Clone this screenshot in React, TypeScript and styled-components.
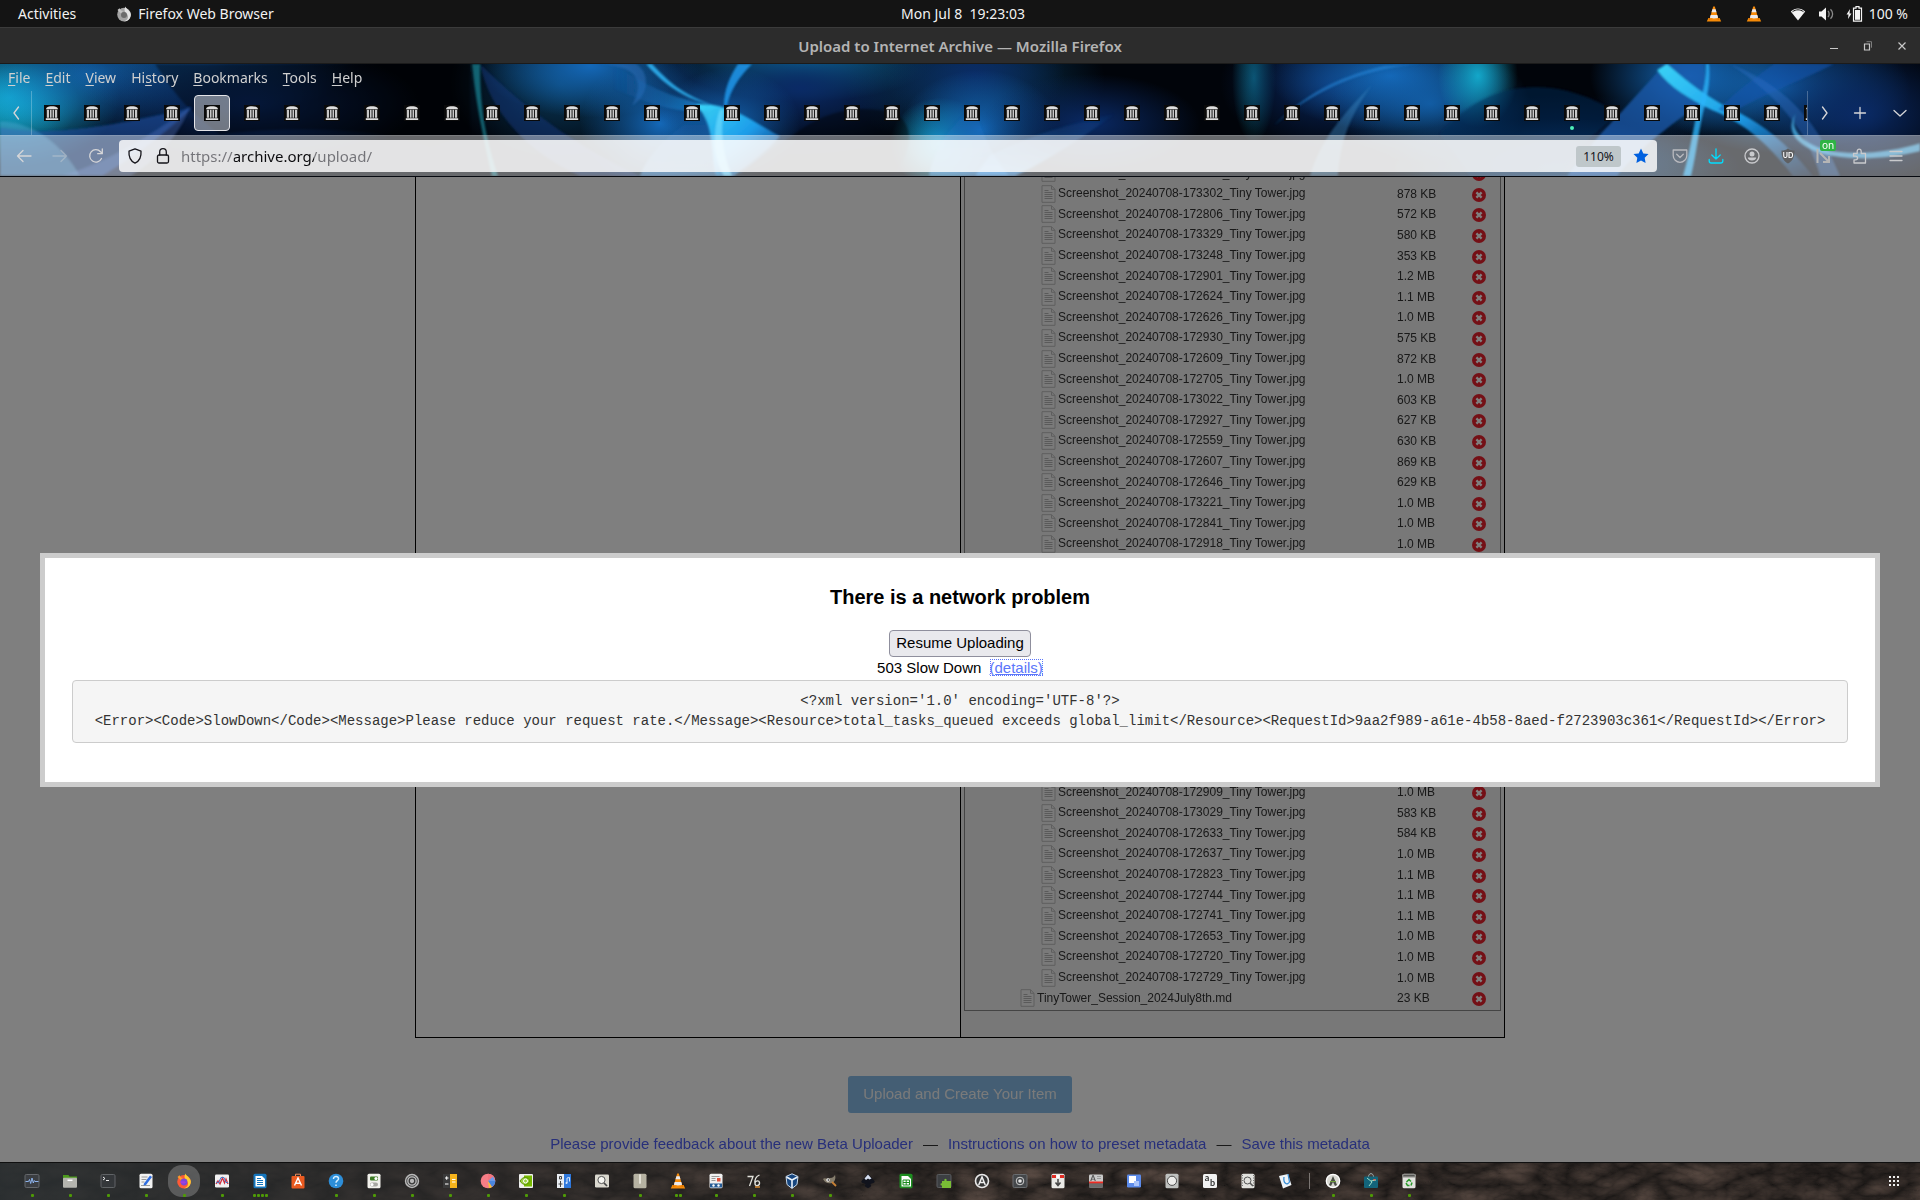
import React from "react";
import styled, { createGlobalStyle, css } from "styled-components";

const UI = `"Noto Sans", "Open Sans", sans-serif`;
const DOC = `"Liberation Sans", Arial, sans-serif`;
const MONO = `"Liberation Mono", "Courier New", monospace`;

const GlobalStyle = createGlobalStyle`
  *, *::before, *::after { box-sizing: border-box; }
  body { margin: 0; background: #141414; }
  button { font: inherit; color: inherit; background: none; border: 0; padding: 0; }
  svg { display: block; }
`;

/* ---------- shell ---------- */

const Desktop = styled.div`
  display: flex;
  flex-direction: column;
  height: 100vh;
  overflow: hidden;
  font-family: ${UI};
  font-size: 14px;
`;

const TopBar = styled.header`
  display: grid;
  grid-template-columns: 1fr auto 1fr;
  align-items: center;
  height: 27px;
  flex: none;
  padding: 0 12px 0 18px;
  background: #141414;
  color: #f2f2f2;
  line-height: 26px;
`;

const TopGroup = styled.div<{ $end?: boolean; $gap: number }>`
  display: flex;
  align-items: center;
  justify-content: ${(p) => (p.$end ? "flex-end" : "flex-start")};
  gap: ${(p) => p.$gap}px;
`;

const TopButton = styled.button`
  display: flex;
  align-items: center;
  gap: 6px;
`;

const Cones = styled.div`
  display: flex;
  gap: 24px;
  margin-right: 16px;
`;

const TitleBar = styled.div`
  display: grid;
  grid-template-columns: 1fr auto 1fr;
  align-items: center;
  height: 37px;
  flex: none;
  padding: 0 10px;
  background: #2c2c2c;
  border-top: 1px solid #3b3b3b;
  border-bottom: 1px solid #1b1b1b;
  color: #b4b4b4;
  font-size: 15px;
  font-weight: 600;
`;

const WindowControls = styled.div`
  grid-column: 3;
  display: flex;
  justify-content: flex-end;
  gap: 18px;
`;

const WindowTitle = styled.div`
  grid-column: 2;
`;

/* ---------- browser chrome ---------- */

const Chrome = styled.div`
  position: relative;
  flex: none;
  background: #000;
  border-bottom: 1px solid #06090f;
  color: #d6d6d8;
`;

const ThemeArt = styled.svg`
  position: absolute;
  inset: 0;
  width: 100%;
  height: 100%;
`;

const ChromeRows = styled.div`
  position: relative;
`;

const MenuBar = styled.nav`
  display: flex;
  align-items: center;
  gap: 15px;
  height: 27px;
  padding: 0 8px;
  color: #d0d0d0;
`;

const MenuItem = styled.button`
  line-height: 20px;
  u { text-underline-offset: 2px; }
`;

const TabRow = styled.div`
  display: flex;
  align-items: stretch;
  height: 44px;
`;

const TabArrow = styled.button<{ $w: number }>`
  flex: none;
  display: grid;
  place-items: center;
  width: ${(p) => p.$w}px;
`;

const TabStrip = styled.div`
  flex: 1;
  min-width: 0;
  display: flex;
  align-items: center;
  overflow: hidden;
  border-left: 1px solid #ffffff40;
  border-right: 1px solid #ffffff40;
`;

const Tab = styled.button<{ $active?: boolean }>`
  position: relative;
  flex: none;
  display: grid;
  place-items: center;
  width: 36px;
  height: 36px;
  margin: 0 2px;
  border-radius: 4px;
  border: 1px solid transparent;
  ${(p) => p.$active && css`
    background: #ffffff70;
    border-color: #e4e4e8;
  `}
`;

const TabDot = styled.span`
  position: absolute;
  left: 15px;
  bottom: 0;
  width: 4px;
  height: 4px;
  border-radius: 2px;
  background: #4ff0b8;
`;

const NavBar = styled.div`
  display: flex;
  align-items: center;
  height: 41px;
  padding: 0 6px;
  background: #ffffff68;
  border-top: 1px solid #ffffff20;
`;

const ToolButton = styled.button`
  position: relative;
  flex: none;
  display: grid;
  place-items: center;
  width: 36px;
  height: 36px;
`;

const Address = styled.form`
  flex: 1;
  display: flex;
  align-items: center;
  height: 32px;
  margin: 0 5px;
  padding: 0 2px 0 8px;
  border-radius: 4px;
  background: #ffffffd0;
  color: #15141a;
`;

const AddressIcon = styled.button`
  display: grid;
  place-items: center;
  width: 28px;
  height: 28px;
  &:first-child { width: 16px; margin-right: 6px; }
`;

const AddressInput = styled.input`
  flex: 1;
  min-width: 0;
  height: 28px;
  padding: 0;
  margin-left: 4px;
  border: 0;
  outline: 0;
  font: 15px ${UI};
  background: linear-gradient(90deg, #737378 53px, #0c0c0f 53px, #0c0c0f 133px, #737378 133px);
  -webkit-background-clip: text;
  background-clip: text;
  -webkit-text-fill-color: transparent;
`;

const ZoomBadge = styled.button`
  width: 45px;
  height: 21px;
  margin-right: 6px;
  border-radius: 3px;
  background: #bfc7ca;
  color: #15141a;
  font-size: 12px;
`;

const OnBadge = styled.span`
  position: absolute;
  top: 2px;
  left: 14px;
  padding: 0 2px;
  border-radius: 2px;
  background: #2fb344;
  color: #fff;
  font-size: 10px;
  line-height: 11px;
`;

/* ---------- page ---------- */

const Viewport = styled.main`
  position: relative;
  flex: 1;
  min-height: 0;
  display: flex;
  flex-direction: column;
  justify-content: flex-end;
  align-items: center;
  overflow: hidden;
  background: #fff;
  color: #333;
  font-family: ${DOC};
  font-size: 15px;
`;

const Panel = styled.div`
  flex: none;
  display: grid;
  grid-template-columns: 1fr 1fr;
  width: 100%;
  max-width: 1090px;
  border: 1px solid #000;
`;

const FilesPane = styled.div`
  padding: 3px 3px 26px;
  background: #f0f0f0;
  border-left: 1px solid #000;
`;

const FileTable = styled.table`
  width: 100%;
  border-collapse: separate;
  border-spacing: 0;
  table-layout: fixed;
  padding-bottom: 2px;
  border: 1px solid #888;
  font-size: 12px;
  td { padding: 0; }
`;

const FileRow = styled.tr`
  height: 21px;
  &:nth-child(5n + 1), &:nth-child(5n + 3) { height: 20px; }
`;

const Covered = styled.tr`
  height: 228px;
`;

const NameCell = styled.div<{ $top?: boolean }>`
  display: flex;
  align-items: center;
  gap: 2px;
  line-height: 17px;
  padding-left: ${(p) => (p.$top ? 55 : 76)}px;
  white-space: nowrap;
`;

const SizeCol = styled.col`
  width: 75px;
`;

const ActionCol = styled.col`
  width: 28px;
`;

const RemoveButton = styled.button`
  display: block;
`;

const Submit = styled.button`
  flex: none;
  width: 224px;
  height: 37px;
  margin-top: 38px;
  border-radius: 3px;
  background: #88bde8;
  color: #f4f4f4;
  font-size: 15px;
  padding-bottom: 3px;
`;

const PageLinks = styled.footer`
  flex: none;
  display: flex;
  gap: 10px;
  margin: 21px 0 8px;
  line-height: 20px;
`;

const PageLink = styled.a`
  color: #5060f4;
  text-decoration: none;
`;

const Backdrop = styled.div`
  position: absolute;
  inset: 0;
  display: flex;
  align-items: center;
  justify-content: center;
  padding: 0 40px;
  background: rgba(0, 0, 0, 0.5);
`;

const Dialog = styled.section`
  flex: 1;
  padding: 27px 27px 39px;
  border: 5px solid #ccc;
  background: #fff;
  color: #000;
  text-align: center;
  line-height: 22px;
`;

const DialogTitle = styled.h2`
  margin: 0 0 21px;
  font-size: 20px;
  line-height: 24px;
`;

const ResumeButton = styled.button`
  display: block;
  width: 142px;
  height: 27px;
  margin: 0 auto;
  border: 1px solid #8f8f9d;
  border-radius: 4px;
  background: #e9e9ed;
  color: #000;
  line-height: 20px;
`;

const Status = styled.div`
  padding-bottom: 1px;
`;

const DetailsLink = styled.a`
  margin-left: 4px;
  color: #5b76fa;
  outline: 1px dotted #5b76fa;
  outline-offset: -1px;
`;

const Response = styled.pre`
  margin: 0;
  padding: 10px 10px 11px;
  border: 1px solid #ccc;
  border-radius: 4px;
  background: #f5f5f5;
  color: #333;
  font: 14px/20px ${MONO};
`;

/* ---------- dock ---------- */

const Dock = styled.footer`
  position: relative;
  flex: none;
  height: 38px;
  border-top: 1px solid #101010;
  background: #272321;
`;

const DockRow = styled.div`
  position: relative;
  display: flex;
  align-items: center;
  height: 35px;
  padding: 0 7px 0 13px;
`;

const DockItem = styled.button<{ $active?: boolean }>`
  position: relative;
  flex: none;
  display: grid;
  place-items: center;
  width: 32px;
  height: 32px;
  margin: 0 3px;
  border-radius: 14px;
  background: ${(p) => (p.$active ? "#ffffff38" : "transparent")};
`;

const Dots = styled.span`
  position: absolute;
  left: 0;
  right: 0;
  bottom: 0;
  display: flex;
  justify-content: center;
  gap: 1px;
  i { width: 3px; height: 3px; border-radius: 1px; background: #4e9a06; }
`;

const DockDivider = styled.span`
  width: 1px;
  height: 16px;
  margin: 0 4px;
  background: #7b7673;
`;

const DockEnd = styled(DockItem)`
  margin-left: auto;
`;

/* ---------- icons ---------- */

const line = { fill: "none", stroke: "currentColor", strokeWidth: 1.3, strokeLinecap: "round", strokeLinejoin: "round" } as const;

const Svg = ({ s = 16, children }: { s?: number; children: React.ReactNode }) => (
  <svg width={s} height={s} viewBox="0 0 16 16" aria-hidden="true">{children}</svg>
);

const coneShape = (
  <>
    <path d="M2.4 12h11.2l1.6 3.6H.8z" fill="#f58a07" />
    <path d="M3.4 12h9.2l.6 1.4H2.8z" fill="#c85f04" />
    <path d="M7.2.5h1.6L12.4 13c-2 1.3-6.800 1.300-8.800 0z" fill="#f78b0a" />
    <path d="M6.400 3.200h3.200l.9 3H5.500zM4.700 9h6.600l.8 2.600c-2 1.200-6.200 1.200-8.200 0z" fill="#e9e9ee" />
  </>
);

const Archive = () => (
  <Svg>
    <rect width="16" height="16" fill="#0a0a0a" />
    <path d="M1.800 4.300 2.800 2.500C5 .8 11 .8 13.200 2.500l1 1.800zM1.800 13.200h12.400V15H1.800z" fill="#dedede" />
    <path d="M2.800 4.800h2.300v8H2.800zM6 4.800h1.600v8H6zM8.500 4.800H10v8H8.500zM10.900 4.800h2.300v8h-2.300z" fill="#c8c8c8" />
  </Svg>
);

const FirefoxMono = () => (
  <Svg>
    <circle cx="8" cy="8.600" r="6.800" fill="#a4a4a4" />
    <path d="M9.500.5c0 2 4.500 3.500 5.300 7.500.5 4-2.800 7.500-6.800 7.500 4-1.500 5-5 3-7.500-2-1.500-3.500-4-1.500-7.500z" fill="#e4e4e4" />
    <path d="M1.500 4 3.500 2.200 5 4.500l2 .5-2 2.500z" fill="#c4c4c4" />
    <circle cx="8" cy="9" r="3" fill="#6c6c6c" />
  </Svg>
);

const FileGlyph = () => (
  <svg width="15" height="18" viewBox="0 0 15 18" aria-hidden="true">
    <path d="M1 .7h9.500L14 4.300v13H1z" fill="#f4f4f4" stroke="#bdbdbd" />
    <path d="M10.500.7v3.600H14" fill="none" stroke="#bdbdbd" />
    <path d="M3.500 5.500h4M3.500 7.500h8M3.500 9.500h8M3.500 11.500h8M3.500 13.500h8" stroke="#b4b4b4" />
  </svg>
);

const RemoveGlyph = () => (
  <svg width="14" height="16" viewBox="0 0 14 16" aria-hidden="true">
    <circle cx="7" cy="9" r="7" fill="#e8202c" />
    <path d="m4.400 6.400 5.200 5.200m0-5.200-5.200 5.200" stroke="#fff" strokeWidth="2.300" />
  </svg>
);

const label = (text: string, fill: string, size: number, y = 12, x = 8) => (
  <text x={x} y={y} textAnchor="middle" fontFamily="Lato, sans-serif" fontSize={size} fontWeight="700" fill={fill}>{text}</text>
);

type App = { name: string; dots: number; art: React.ReactNode; active?: boolean };

const sheet = (fill: string, extra?: React.ReactNode) => (
  <><rect x="1.500" y=".8" width="13" height="14.400" rx="1.500" fill={fill} />{extra}</>
);
const square = (fill: string, extra?: React.ReactNode, stroke = "none") => (
  <><rect x="1" y="1.500" width="14" height="13" rx="1.300" fill={fill} stroke={stroke} />{extra}</>
);

const apps: App[] = [
  { name: "System Monitor", dots: 1, art: square("#3b3e42", <path d="M1.500 8.500h3l1-2 1.200 4L8 5l1.300 5 1-2.500.7 1h3.500" fill="none" stroke="#8db4ee" />, "#65686c") },
  { name: "Files", dots: 1, art: <><path d="M1 2h5.500l1 1.500H15V8H1z" fill="#4c9a1c" /><rect x="1" y="4.800" width="14" height="10" rx="1" fill="#b4b4ae" /><path d="M5.500 7.300h5" stroke="#fff" strokeWidth="1.500" /></> },
  { name: "Terminal", dots: 1, art: square("#34373a", <path d="m3 4 2 1.500L3 7M6 7.500h3" fill="none" stroke="#eee" />, "#606366") },
  { name: "Text Editor", dots: 1, art: sheet("#f2f2f2", <><path d="M3.500 4h6M3.500 6.500h5M3.500 9h3M3 12.500h9" stroke="#9a9a9a" /><path d="m6 10.500 6-8 2 1.500-6 8-2.500.6z" fill="#2f6de0" /></>) },
  { name: "Firefox", dots: 1, active: true, art: <><circle cx="8" cy="8.800" r="6.800" fill="#ff5a36" /><path d="M9.500.5C9.500 2.500 14 4 14.800 8c.5 4-2.800 7.500-6.800 7.500 4-1.500 5-5 3-7.500-2-1.500-3.500-4-1.500-7.500z" fill="#ffcf30" /><path d="M1.500 4 3.500 2.200 5 4.500l2 .5-2 2.500z" fill="#ff9a2a" /><circle cx="8" cy="9" r="3.400" fill="#7b48d8" /><path d="M4 8c2 1 5-1 6 1.500-2 2-5.500 1.500-6-1.500z" fill="#a23ee0" /></> },
  { name: "Power Statistics", dots: 1, art: square("#f1f1f1", <><path d="m2 11 2-3 2 3 2.500-6 2 5 1.500-4 2 5" fill="none" stroke="#d22d3d" strokeWidth="1.300" /><path d="m2 9 2.500 1L7 4.500h3l2 5h2" fill="none" stroke="#4878c8" /></>) },
  { name: "Writer", dots: 4, art: sheet("#1676bd", <><path d="M3.500 3H10l3 3v7.500H3.500z" fill="#fff" /><path d="M5 5.500h4M5 7.500h6M5 9.500h6M5 11.500h6" stroke="#1676bd" /></>) },
  { name: "Software", dots: 0, art: <><path d="M5.500 3V1.200h5V3" fill="none" stroke="#f28b5c" /><rect x="1.500" y="3" width="13" height="12.500" rx="1" fill="#ea5a20" /><path d="M4.500 12.500 8 5l3.500 7.500M5.500 10.300h5" fill="none" stroke="#fff" strokeWidth="1.400" /></> },
  { name: "Help", dots: 1, art: <><circle cx="8" cy="8" r="7.300" fill="#2d8ed8" /><path d="M5.500 6c0-3.600 5.500-3.200 5 0-.3 1.700-2.500 1.700-2.500 3.800M8 11.500v1.600" fill="none" stroke="#d9f0ff" strokeWidth="1.500" /></> },
  { name: "Tweaks", dots: 1, art: sheet("#f1f1ec", <><rect x="4" y="3.500" width="8" height="4" rx="1" fill="#3c7a24" /><circle cx="10" cy="5.500" r="1.600" fill="#fff" /><rect x="4" y="9.500" width="8" height="4" rx="2" fill="#a7a7a2" /><circle cx="6" cy="11.500" r="1.500" fill="#fff" /></>) },
  { name: "Clock Applet", dots: 1, art: <><circle cx="8" cy="8" r="7.200" fill="#b9b9b9" /><circle cx="8" cy="8" r="5.300" fill="#b9b9b9" stroke="#4b4b4b" /><circle cx="8" cy="8" r="2.800" fill="none" stroke="#3b3b3b" strokeWidth="1.300" /></> },
  { name: "Calculator", dots: 1, art: <><path d="M1 1h7v14H1z" fill="#3a3a3a" /><path d="M8 1h7v14H8z" fill="#f6b41c" /><path d="M3 5h3.500M4.700 3.300v3.500M3 11h3.500M10 6.500h3.500M10 9h3.500" stroke="#fff" /></> },
  { name: "Disk Usage", dots: 1, art: <><circle cx="8" cy="8" r="7.300" fill="#f67e86" /><path d="M8 8V.7A7.300 7.300 0 0 1 15.300 8z" fill="#f4747c" /><path d="M8 8h7.300A7.300 7.300 0 0 1 12 14z" fill="#4a86e0" /><path d="m8 8 4 6a7 7 0 0 1-3 1.200z" fill="#f5c33a" /><path d="m8 8 5-4.500 2.300 4.500z" fill="#6d9ae8" /></> },
  { name: "NVIDIA Settings", dots: 1, art: <><rect x="1" y="1" width="14" height="14" rx="1" fill="#efefef" /><path d="M6 2.500h8v11H6z" fill="#76b900" /><path d="M2 8c3-5 8-4.500 10 0-2 4-7 5-10 0z" fill="#9ccf45" stroke="#5b9500" /><circle cx="7.500" cy="8" r="2" fill="none" stroke="#fff" /></> },
  { name: "Character Tools", dots: 1, art: <><path d="M1 1h7v14H1z" fill="#e9edf2" /><path d="M8 1h7v14H8z" fill="#2f78dc" /><path d="M4.500 8v6M2.500 11h4M3.500 3.500h2v2.500h-2z" fill="none" stroke="#444" /><path d="M11 10V5l2.500-.5v4" fill="none" stroke="#d7e8ff" /><circle cx="10.500" cy="10" r="1" fill="#d7e8ff" /></> },
  { name: "Image Viewer", dots: 0, art: square("#dad8cf", <><circle cx="7.500" cy="7" r="3.600" fill="#f6f6f2" stroke="#555" /><path d="m10 10 3 3" stroke="#444" strokeWidth="1.700" /></>) },
  { name: "Archive Manager", dots: 1, art: sheet("#b6b2a2", <path d="M8 1v10M7 3h2M7 5h2M7 7h2M7 9h2" stroke="#f2f0e6" />) },
  { name: "VLC", dots: 2, art: coneShape },
  { name: "Document Viewer", dots: 1, art: sheet("#f0f0f0", <><path d="M3.500 3.500h8M3.500 5.500h4M3.500 7.500h4" stroke="#999" /><path d="M9 5h3.500v3.500H9z" fill="#e0503a" /><path d="M2 10.500h12v4H2z" fill="#245a94" /><circle cx="5.500" cy="12.500" r="1.200" fill="#fff" /><circle cx="10.500" cy="12.500" r="1.200" fill="#fff" /></>) },
  { name: "Font Manager", dots: 1, art: <><path d="M1.500 3.500H7L3.500 13M13.500 2C9 4 8.500 8 9 11c.5 2.500 5 2 4.500-1.500-.5-2.500-4-2-4.500.5" fill="none" stroke="#e2e2dc" strokeWidth="1.300" /><path d="M9 14h5" stroke="#d88a2e" strokeWidth="1.500" /></> },
  { name: "VirtualBox", dots: 1, art: <><path d="M2 3.500 8 .8l6 2.700-1 8L8 15.500l-5-4z" fill="#17467f" stroke="#c4d6ea" /><path d="m2.500 4 5.500 3 5.500-3M8 7v8" fill="none" stroke="#e9f2fb" strokeWidth="1.600" /></> },
  { name: "GIMP", dots: 1, art: <><path d="M1 6c2-2 4 1 7-1 3 0 4-2 5-3 1 3 0 7-3 8-4 1-7 0-9-4z" fill="#857d6d" /><circle cx="6" cy="7" r="1.700" fill="#fff" /><circle cx="6.300" cy="7" r=".8" fill="#111" /><path d="m10 9 4 4" stroke="#c98236" strokeWidth="1.800" /></> },
  { name: "Inkscape", dots: 0, art: <><path d="M8 .8 14.500 8c1 2-3 2.500-4 3 0 1.500 1.500 1.500 0 2.700L8 15.200l-2.500-1.500c-1.500-1.200 0-1.200 0-2.700-1-.5-5-1-4-3z" fill="#11131c" /><path d="M8 1.500 11.500 5.500 9.500 6.500 8 5.500 6 7 4.500 5.500z" fill="#d7dff0" /></> },
  { name: "Calc", dots: 0, art: sheet("#1d8d20", <><path d="M3.500 3H10l3 3v7.500H3.500z" fill="#fff" /><path d="M5 7h6.500v5H5zM5 9.500h6.500M8.200 7v5" fill="none" stroke="#1d8d20" /></>) },
  { name: "Extensions", dots: 0, art: square("#3c3f42", <path d="M6 8h2.500c-1-3 3-3 2 0H15v7H6v-2.500c-2 .8-2-3 0-2z" fill="#79bd35" />, "#5a5d60") },
  { name: "Software Updater", dots: 0, art: <><circle cx="8" cy="8" r="6.500" fill="#353535" stroke="#e8e8e8" strokeWidth="1.600" /><path d="M4.700 12 8 4l3.300 8M5.800 9.500h4.400" fill="none" stroke="#eee" strokeWidth="1.500" /></> },
  { name: "Screenshot", dots: 0, art: square("#44474a", <><circle cx="8" cy="8" r="3.800" fill="none" stroke="#cfcfcf" /><circle cx="8" cy="8" r="1.800" fill="#e6e6e6" /></>, "#6a6d70") },
  { name: "Transmission", dots: 0, art: sheet("#e9e9e6", <><path d="M2 2h4v3H2zM10 2h4v3h-4z" fill="#e02d24" /><path d="M6.500 2h3v3h-3z" fill="#fff" /><path d="M8 6v6M5.500 9.500 8 12.500l2.500-3" fill="none" stroke="#444" strokeWidth="1.500" /></>) },
  { name: "Document Scanner", dots: 0, art: square("#c9c9c9", <><path d="M1 10h14v4.500H1z" fill="#6a6a6a" /><path d="M1 8.500h14v1.800H1z" fill="#ee2b22" />{label("A", "#555", 8, 8, 5)}<path d="M9 3.500h4M9 5.500h4" stroke="#999" /></>) },
  { name: "Displays", dots: 0, art: square("#5c8bea", <><path d="M3 3h7v7H3z" fill="#fff" /><path d="M8 8h5v5H8z" fill="#a8c3fa" /></>) },
  { name: "Disks", dots: 0, art: sheet("#bfc1bf", <circle cx="8" cy="7.800" r="4.600" fill="#ececea" stroke="#4e4e4e" />) },
  { name: "Fonts", dots: 0, art: <><rect x="1" y="1" width="14" height="14" rx="1.500" fill="#f2f2f2" />{label("a", "#333", 9, 8, 5)}{label("b", "#333", 9, 13, 10.500)}</> },
  { name: "Log Viewer", dots: 0, art: sheet("#e1e1dd", <><circle cx="7.500" cy="7.500" r="3.500" fill="none" stroke="#555" /><path d="m10 10 3 3" stroke="#555" strokeWidth="1.500" /><path d="M2.500 2v12M13.500 2v12" stroke="#777" strokeDasharray="1 1.500" /></>) },
  { name: "Sticky Notes", dots: 0, art: <><path d="m1 3 9-2 3.500 11L5 15.500z" fill="#eef3f7" /><path d="M6 4c-1 6 3 9 5.500 5L10 1" fill="none" stroke="#3b8fd6" strokeWidth="1.300" /></> },
];

const rightApps: App[] = [
  { name: "Appimage", dots: 1, art: <><circle cx="8" cy="8" r="6.700" fill="#d8d8d2" stroke="#fff" strokeWidth="1.300" /><path d="M4 12 8 3l4 9-2 1-2-4-2 4z" fill="#4a4d45" /><path d="M5 8.500h6" stroke="#6fa03a" /></> },
  { name: "Snap Store", dots: 1, art: <><path d="M5.500 4c0-4.500 5-4.500 5 0" fill="none" stroke="#9fb4b8" /><rect x="1" y="3.500" width="14" height="11.500" rx="1" fill="#13647a" /><path d="m4 5 5 4-3 4M8 8l5-1" fill="none" stroke="#9fe0c8" /><path d="m10 6 3 0-2 2z" fill="#e8604a" /></> },
  { name: "Trash", dots: 1, art: sheet("#e2e2de", <><path d="M1.500 1h13v3.500h-13z" fill="#8c8c88" /><path d="M2.500 2.700h11" stroke="#4b4b48" /><path d="m5.500 9 2.500-2.500 2 2M5 10l1.500 2.500h2M11 9.500l-1 3" fill="none" stroke="#2b9a2b" strokeWidth="1.500" /></>) },
];

/* ---------- theme artwork ---------- */

const glows: [number, number, number, number, string, number][] = [
  [10, 34, 110, 70, "teal", 1], [20, 40, 60, 40, "teal", 0.7], [90, 10, 140, 70, "blue", 0.8], [205, -4, 150, 60, "blue", 0.55],
  [250, 40, 170, 60, "navy", 0.9], [560, 20, 110, 80, "deep", 1], [590, 2, 110, 52, "blue", 1], [660, 60, 80, 70, "blue", 1],
  [805, -6, 130, 44, "teal", 0.9], [800, 24, 160, 70, "navy", 1], [730, 60, 70, 56, "blue", 0.9], [975, 16, 130, 76, "deep", 1],
  [975, 10, 90, 60, "navy", 0.9], [940, 80, 50, 46, "teal", 1], [980, 66, 80, 60, "blue", 1], [1090, 60, 110, 50, "navy", 1],
  [1254, 14, 22, 66, "teal", 0.55], [1330, 20, 110, 70, "navy", 0.9], [1390, 12, 120, 56, "blue", 1], [1430, 40, 100, 60, "blue", 0.8],
  [1478, 12, 40, 52, "teal", 0.9], [1560, 105, 180, 50, "deep", 1], [1560, 90, 160, 60, "navy", 0.6], [1690, 12, 100, 64, "blue", 1],
  [1780, 24, 130, 66, "blue", 0.9], [1860, 50, 110, 70, "navy", 1],
];

const Theme = () => (
  <ThemeArt viewBox="0 0 1920 113" preserveAspectRatio="none" aria-hidden="true">
    <defs>
      {[["teal", "#14b4d6"], ["blue", "#1468b8"], ["deep", "#0a3a5c"], ["navy", "#0a2a66"]].map(([id, c]) => (
        <radialGradient key={id} id={id}>
          <stop offset="0" stopColor={c} />
          <stop offset="1" stopColor={c} stopOpacity="0" />
        </radialGradient>
      ))}
      <linearGradient id="ray"><stop offset="0" stopColor="#1a5cae" stopOpacity=".2" /><stop offset="1" stopColor="#22b4ff" /></linearGradient>
      <linearGradient id="ray2" x1="0" y1="0" x2="1" y2="1"><stop offset="0" stopColor="#3fe0ff" /><stop offset=".5" stopColor="#1ea6f4" /><stop offset="1" stopColor="#1e70d8" stopOpacity=".15" /></linearGradient>
      <linearGradient id="wash" x1="0" y1="0" x2="0" y2="1"><stop offset="0" stopColor="#1a5cae" stopOpacity=".05" /><stop offset="1" stopColor="#3c9cf0" stopOpacity=".7" /></linearGradient>
      <filter id="soft" x="-2%" width="104%" y="-20%" height="140%"><feGaussianBlur stdDeviation="1.200" /></filter>
    </defs>
    <rect width="1920" height="113" fill="#01040a" />
    {glows.map(([x, y, rx, ry, id, o], i) => <ellipse key={i} cx={x} cy={y} rx={rx} ry={ry} fill={`url(#${id})`} opacity={o} />)}
    <g filter="url(#soft)">
      <path d="M155 0c20 30 30 45 65 71 60-8 160-8 210 12L470 71V0z" fill="#000" opacity=".4" />
      <path d="M0 64c60 10 120-4 192-20-20 20-50 45-90 69H0z" fill="#1b4fa0" opacity=".6" />
      <path d="M0 58c30 0 60 20 80 55H0z" fill="#5eb8e6" opacity=".35" />
      <path d="M60 113c40-10 90-40 130-70-10 30-40 60-60 70z" fill="#5678c8" opacity=".35" />
      <path d="M472 0c3 30 8 60 20 113h6C484 70 480 40 480 0z" fill="#1fb6c8" opacity=".5" />
      <path d="M480 0c40 40 90 80 160 113h-60C530 90 490 50 480 0z" fill="#183c88" opacity=".45" />
      <path d="M600 0c40 2 44 20 32 42 18-10 18-34 4-42z" fill="#3a7fd0" opacity=".35" />
      <path d="M615 0c26 20 62 38 106 43-24 10-60 4-106-18z" fill="url(#ray)" opacity=".6" />
      <path d="M652 0c18 20 36 34 66 43-32-7-52-20-72-43z" fill="#2cb0f0" opacity=".9" />
      <path d="M752 0c-14 14-22 28-25 42h-3c0-16 6-30 14-42z" fill="#1f98ec" opacity=".85" />
      <path d="M696 41c32-2 46 10 84 32-12 14-30 28-46 40h-18c-6-24 0-50-20-72z" fill="url(#ray2)" opacity=".9" />
      <path d="M720 46c-7 20-8 46 4 67h8c-10-24-12-44-8-67z" fill="#6cdcff" opacity=".7" />
      <path d="M706 46c-30 20-56 40-66 67h76c-4-24-4-46-10-67z" fill="url(#wash)" opacity=".7" />
      <path d="M790 74c30-24 60-34 100-26 30 10 20 50 0 65H740c10-14 30-26 50-39z" fill="#000" opacity=".4" />
      <path d="M990 92c40-20 80-32 125-42-34 26-70 48-100 63h-40z" fill="url(#wash)" />
      <path d="M975 40c-20 20-40 40-46 73h80c-20-24-30-50-34-73z" fill="url(#wash)" opacity=".8" />
      <path d="M1290 48c40-28 80-44 130-48l-36 2c-50 12-80 30-110 60z" fill="#2a8ce0" opacity=".55" />
      <path d="M1310 113c10-34 30-60 62-92-24 34-32 60-34 92z" fill="#3c8ec8" opacity=".4" />
      <path d="M1440 71c50-60 120-60 180-20-30 20-50 40-60 62h-90z" fill="#0c2c58" opacity=".5" />
      <path d="M1620 50 1665 0h38c3 14 2 24 4 36-30 20-70 50-90 77h-50c16-20 30-40 53-63z" fill="#1a5cae" opacity=".75" />
      <path d="M1667 0c16 14 30 26 54 40 44 20 66 40 92 73h-20c-26-34-50-54-80-66-24-12-44-24-56-41z" fill="url(#ray2)" opacity=".9" />
      <path d="M1706 0c1 14-3 28-7 42-6 20-8 44-16 71h8c6-26 8-50 14-72 4-14 5-28 4-41z" fill="#2ab4fa" opacity=".8" />
      <path d="M1718 46c20-20 40-34 56-46h60c-40 20-70 30-104 50z" fill="#1a58b0" opacity=".55" />
      <path d="M1730 0c50 20 84 50 110 113h-20c-10-40-40-80-90-113z" fill="#2c70c8" opacity=".4" />
      <path d="M1796 50c-8 14 6 30 28 36 30 8 70 2 96-6v8c-34 8-70 10-100 2-28-10-34-26-24-40z" fill="#4cb8ee" opacity=".75" />
    </g>
  </ThemeArt>
);

const DockTexture = () => (
  <ThemeArt preserveAspectRatio="none" aria-hidden="true">
    <filter id="leaves" x="0" y="0" width="100%" height="100%" colorInterpolationFilters="sRGB">
      <feTurbulence type="turbulence" baseFrequency="0.022 0.045" numOctaves="4" seed="11" />
      <feColorMatrix values="0.320 0 0 0 0.090  0.260 0 0 0 0.080  0.230 0 0 0 0.075  0 0 0 0 1" />
    </filter>
    <linearGradient id="shade">
      <stop offset="0" stopColor="#2b3032" stopOpacity=".9" />
      <stop offset=".25" stopColor="#2a2929" stopOpacity=".7" />
      <stop offset=".5" stopColor="#2a2725" stopOpacity=".2" />
      <stop offset="1" stopColor="#201a18" stopOpacity=".1" />
    </linearGradient>
    <rect width="100%" height="100%" filter="url(#leaves)" />
    <rect width="100%" height="100%" fill="url(#shade)" />
  </ThemeArt>
);

/* ---------- data ---------- */

const shots = (rows: string) =>
  rows.split(",").map((r) => {
    const [id, n, unit] = r.trim().split(" ");
    return { name: `Screenshot_20240708-${id}_Tiny Tower.jpg`, size: `${n} ${unit}` };
  });

const upperFiles = shots(
  "172715 1.0 MB,173302 878 KB,172806 572 KB,173329 580 KB,173248 353 KB,172901 1.2 MB,172624 1.1 MB,172626 1.0 MB,172930 575 KB,172609 872 KB,172705 1.0 MB,173022 603 KB,172927 627 KB,172559 630 KB,172607 869 KB,172646 629 KB,173221 1.0 MB,172841 1.0 MB,172918 1.0 MB",
);
const lowerFiles = shots(
  "172909 1.0 MB,173029 583 KB,172633 584 KB,172637 1.0 MB,172823 1.1 MB,172744 1.1 MB,172741 1.1 MB,172653 1.0 MB,172720 1.0 MB,172729 1.0 MB",
);

const menus = ["File", "Edit", "View", "History", "Bookmarks", "Tools", "Help"];
const ACCESS: Record<string, number> = { History: 2 };

const FileLine = ({ name, size, top }: { name: string; size: string; top?: boolean }) => (
  <FileRow>
    <td><NameCell $top={top}><FileGlyph />{name}</NameCell></td>
    <td>{size}</td>
    <td><RemoveButton aria-label={`Remove ${name}`}><RemoveGlyph /></RemoveButton></td>
  </FileRow>
);

const DockApp = ({ app }: { app: App }) => (
  <DockItem aria-label={app.name} $active={app.active}>
    <Svg>{app.art}</Svg>
    {app.dots > 0 && <Dots>{Array.from({ length: app.dots }, (_, i) => <i key={i} />)}</Dots>}
  </DockItem>
);

export default function App() {
  return (
    <Desktop>
      <GlobalStyle />
      <TopBar>
        <TopGroup $gap={40}>
          <TopButton>Activities</TopButton>
          <TopButton><FirefoxMono />Firefox Web Browser</TopButton>
        </TopGroup>
        <TopButton>Mon Jul 8&nbsp; 19:23:03</TopButton>
        <TopGroup $end $gap={12}>
          <Cones><Svg>{coneShape}</Svg><Svg>{coneShape}</Svg></Cones>
          <Svg><path d="M8 14.500.8 5.500C5 1.500 11 1.500 15.200 5.500z" fill="#f4f4f4" /><path d="M2.500 5.700c3.500-2.500 7.500-2.500 11 0" fill="none" stroke="#141414" strokeWidth="1" /></Svg>
          <Svg><path d="M1 5.500h2.500L8 1.500v13l-4.500-4H1z" fill="#f4f4f4" /><path d="M10 5c1.500 1.500 1.500 4.500 0 6M12.500 3.200c2.800 2.600 2.800 7 0 9.600" fill="none" stroke="#8a8a8a" strokeWidth="1.300" /></Svg>
          <TopButton>
            <svg width="17" height="16" viewBox="0 0 17 16" aria-hidden="true"><path d="M4 3 .5 8.500h2L2 13l3.500-5.500h-2z" fill="#f4f4f4" /><path d="M10 .6h3v1.500h2.500v13h-8v-13H10z" fill="none" stroke="#f4f4f4" strokeWidth="1.200" /><path d="M9 4h5v9.800H9z" fill="#f4f4f4" /></svg>
            100 %
          </TopButton>
        </TopGroup>
      </TopBar>

      <TitleBar>
        <WindowTitle>Upload to Internet Archive — Mozilla Firefox</WindowTitle>
        <WindowControls>
          <button aria-label="Minimise"><Svg><path d="M4 10.500h8" stroke="#c8c8c8" /></Svg></button>
          <button aria-label="Restore"><Svg><path d="M4.500 6h5v6h-5z" fill="none" stroke="#c8c8c8" strokeWidth="1.200" /><path d="M6.500 3.700h5v6" fill="none" stroke="#7d7d7d" /></Svg></button>
          <button aria-label="Close"><Svg><path d="m4.500 4.500 7 7m0-7-7 7" stroke="#c8c8c8" strokeWidth="1.200" /></Svg></button>
        </WindowControls>
      </TitleBar>

      <Chrome>
        <Theme />
        <ChromeRows>
          <MenuBar>
            {menus.map((m) => {
              const k = ACCESS[m] ?? 0;
              return <MenuItem key={m}>{m.slice(0, k)}<u>{m[k]}</u>{m.slice(k + 1)}</MenuItem>;
            })}
          </MenuBar>
          <TabRow>
            <TabArrow $w={31} aria-label="Scroll tabs left"><Svg><path d="M10.500 2 6 8l4.500 6" {...line} /></Svg></TabArrow>
            <TabStrip>
              {Array.from({ length: 45 }, (_, i) => (
                <Tab key={i} $active={i === 4} aria-label={`Tab ${i + 1}`}>
                  <Archive />
                  {i === 38 && <TabDot />}
                </Tab>
              ))}
            </TabStrip>
            <TabArrow $w={33} aria-label="Scroll tabs right"><Svg><path d="M5.500 2 10 8l-4.500 6" {...line} /></Svg></TabArrow>
            <TabArrow $w={38} aria-label="New tab"><Svg><path d="M8 2.500v11M2.500 8h11" {...line} /></Svg></TabArrow>
            <TabArrow $w={41} aria-label="List all tabs"><Svg><path d="m2 5.500 6 5.500 6-5.500" {...line} /></Svg></TabArrow>
          </TabRow>
          <NavBar>
            <ToolButton aria-label="Back"><Svg><path d="M15 8H1.500M7 2.500 1.500 8 7 13.500" {...line} /></Svg></ToolButton>
            <ToolButton aria-label="Forward"><Svg><path d="M1 8h13.500M9 2.500 14.500 8 9 13.500" {...line} opacity=".4" /></Svg></ToolButton>
            <ToolButton aria-label="Reload"><Svg><path d="M13.500 10.500A6.200 6.200 0 1 1 12.500 3.700L14 5.500M14.300 1v4.700H9.700" {...line} /></Svg></ToolButton>
            <Address onSubmit={(e) => e.preventDefault()}>
              <AddressIcon type="button" aria-label="Tracking protection"><Svg><path d="M8 .8 14 3.200c.4 5-1.500 9.800-6 12C3.500 13 1.600 8.200 2 3.200z" {...line} /></Svg></AddressIcon>
              <AddressIcon type="button" aria-label="Site information"><Svg><rect x="2.500" y="7" width="11" height="8" rx="1.500" {...line} /><path d="M4.700 7V4a3.300 3.300 0 0 1 6.600 0v3" {...line} /></Svg></AddressIcon>
              <AddressInput aria-label="Address" defaultValue="https://archive.org/upload/" />
              <ZoomBadge type="button">110%</ZoomBadge>
              <AddressIcon type="button" aria-label="Edit bookmark"><Svg><path d="m8 .6 2.300 4.800 5.200.7-3.800 3.700.9 5.300L8 12.600l-4.600 2.500.9-5.300L.5 6.100l5.200-.7z" fill="#0060df" /></Svg></AddressIcon>
            </Address>
            <ToolButton aria-label="Save to Pocket"><Svg><path d="M1.200 2h13.600v5.500a6.800 6.800 0 0 1-13.600 0zM4.700 6.300 8 9.500l3.300-3.200" {...line} stroke="#b9babf" /></Svg></ToolButton>
            <ToolButton aria-label="Downloads"><Svg><path d="M8 .8V11M3.800 7 8 11l4.200-4M1.200 11.500V13c0 1.300.7 2 2 2h9.600c1.300 0 2-.7 2-2v-1.500" {...line} stroke="#00ddff" /></Svg></ToolButton>
            <ToolButton aria-label="Account"><Svg><circle cx="8" cy="8" r="7" {...line} stroke="#c9cacd" /><circle cx="8" cy="6" r="2.500" fill="#c9cacd" /><path d="M3.800 9.500h8.400c0 4-8.400 4-8.400 0z" fill="#c9cacd" /></Svg></ToolButton>
            <ToolButton aria-label="uBlock"><Svg><path d="M8 .5c2 1.500 4 2 6.500 2 .2 6-1.500 10.500-6.500 13-5-2.500-6.700-7-6.500-13C4 2.500 6 2 8 .5z" fill="#5f6062" />{label("UD", "#fff", 7, 10)}</Svg></ToolButton>
            <ToolButton aria-label="Redirector"><Svg><path d="M1.500 1v14M4 5l8 8M13 8v6H7" fill="none" stroke="#b5b5b5" strokeWidth="2" /></Svg><OnBadge>on</OnBadge></ToolButton>
            <ToolButton aria-label="Extensions"><Svg><path d="M1.500 5.500h3.700V3.300c0-3 4-3 4 0v2.200h4.300v9.500H2v-3.200h1.500c2.800 0 2.800-3.600 0-3.600h-2z" {...line} stroke="#c9cacd" /></Svg></ToolButton>
            <ToolButton aria-label="Application menu"><Svg><path d="M2 3.500h12M2 8h12M2 12.500h12" {...line} stroke="#c9cacd" /></Svg></ToolButton>
          </NavBar>
        </ChromeRows>
      </Chrome>

      <Viewport>
        <Panel>
          <div />
          <FilesPane>
            <FileTable>
              <colgroup><col /><SizeCol /><ActionCol /></colgroup>
              <tbody>
                {upperFiles.map((f) => <FileLine key={f.name} {...f} />)}
                <Covered><td colSpan={3} /></Covered>
                {lowerFiles.map((f) => <FileLine key={f.name} {...f} />)}
                <FileLine name="TinyTower_Session_2024July8th.md" size="23 KB" top />
              </tbody>
            </FileTable>
          </FilesPane>
        </Panel>
        <Submit>Upload and Create Your Item</Submit>
        <PageLinks>
          <PageLink href="#feedback">Please provide feedback about the new Beta Uploader</PageLink>—
          <PageLink href="#preset">Instructions on how to preset metadata</PageLink>—
          <PageLink href="#save">Save this metadata</PageLink>
        </PageLinks>
        <Backdrop>
          <Dialog role="dialog" aria-labelledby="problem">
            <DialogTitle id="problem">There is a network problem</DialogTitle>
            <ResumeButton>Resume Uploading</ResumeButton>
            <Status>503 Slow Down <DetailsLink href="#details">(details)</DetailsLink></Status>
            <Response>{`<?xml version='1.0' encoding='UTF-8'?>\n<Error><Code>SlowDown</Code><Message>Please reduce your request rate.</Message><Resource>total_tasks_queued exceeds global_limit</Resource><RequestId>9aa2f989-a61e-4b58-8aed-f2723903c361</RequestId></Error>`}</Response>
          </Dialog>
        </Backdrop>
      </Viewport>

      <Dock>
        <DockTexture />
        <DockRow>
          {apps.map((a) => <DockApp key={a.name} app={a} />)}
          <DockDivider />
          {rightApps.map((a) => <DockApp key={a.name} app={a} />)}
          <DockEnd aria-label="Show applications">
            <Svg><path d="M3 3h2v2H3zM7 3h2v2H7zM11 3h2v2h-2zM3 7h2v2H3zM7 7h2v2H7zM11 7h2v2h-2zM3 11h2v2H3zM7 11h2v2H7zM11 11h2v2h-2z" fill="#eee" /></Svg>
          </DockEnd>
        </DockRow>
      </Dock>
    </Desktop>
  );
}
